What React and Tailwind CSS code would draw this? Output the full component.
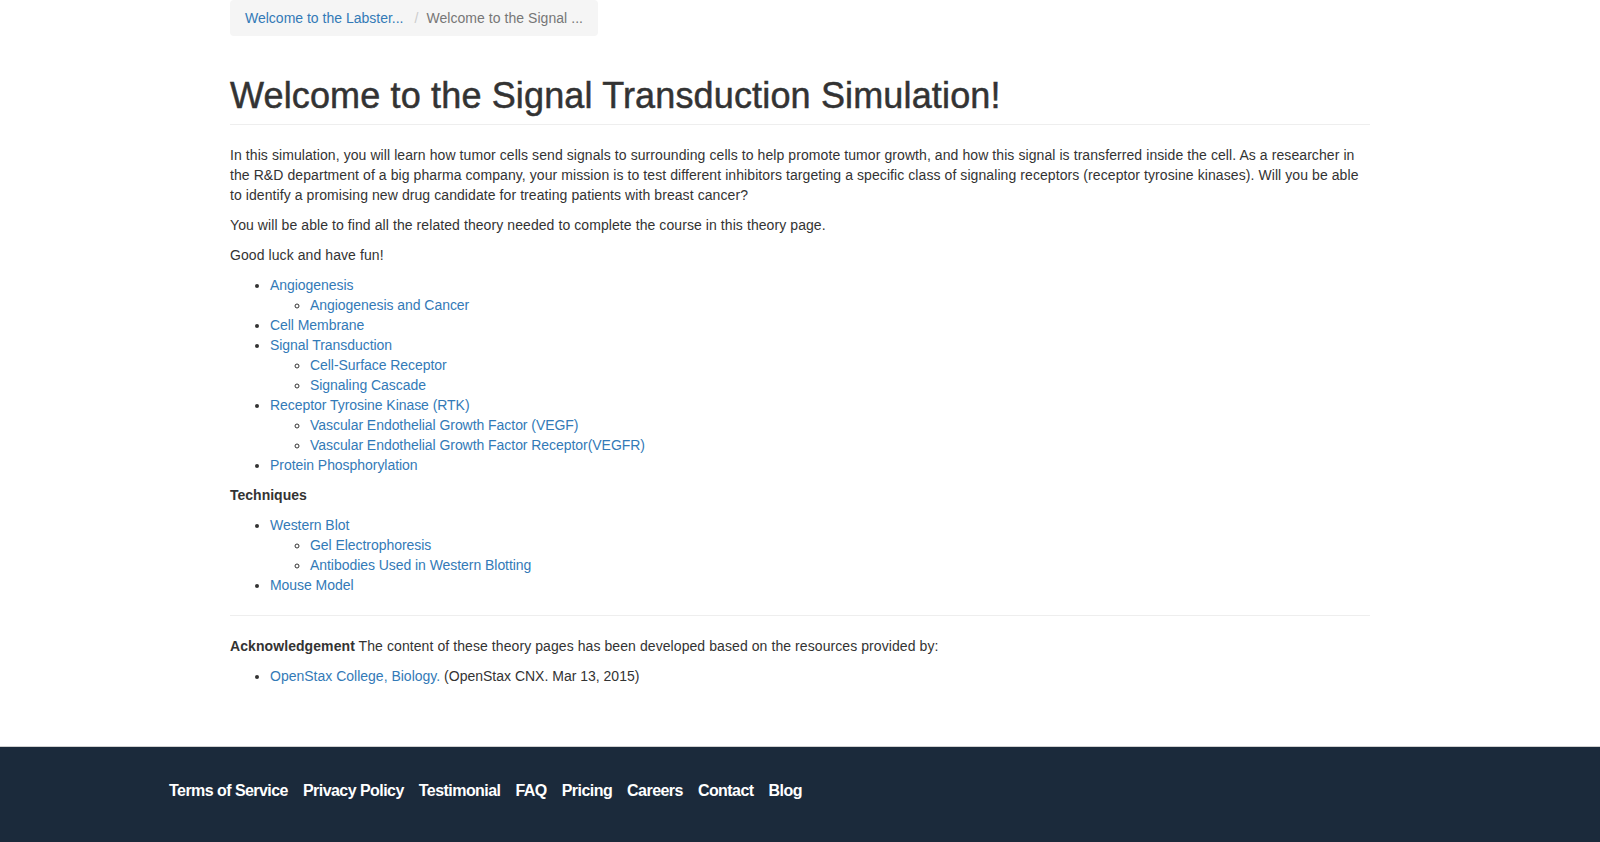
import React from "react";

const link = "text-[#337ab7] hover:underline";

const topics = [
    { title: "Angiogenesis", children: ["Angiogenesis and Cancer"] },
    { title: "Cell Membrane", children: [] },
    { title: "Signal Transduction", children: ["Cell-Surface Receptor", "Signaling Cascade"] },
    { title: "Receptor Tyrosine Kinase (RTK)", children: ["Vascular Endothelial Growth Factor (VEGF)", "Vascular Endothelial Growth Factor Receptor(VEGFR)"] },
    { title: "Protein Phosphorylation", children: [] },
];

const techniques = [
    { title: "Western Blot", children: ["Gel Electrophoresis", "Antibodies Used in Western Blotting"] },
    { title: "Mouse Model", children: [] },
];

const footerLinks = ["Terms of Service", "Privacy Policy", "Testimonial", "FAQ", "Pricing", "Careers", "Contact", "Blog"];

function TopicList({ items, className = "" }) {
    return (
        <ul className={`list-disc pl-[40px] tracking-[-0.05px] ${className}`}>
            {items.map(item => (
                <li key={item.title}>
                    <a href="#" className={link}>{item.title}</a>
                    {item.children.length > 0 && (
                        <ul className="list-[circle] pl-[40px]">
                            {item.children.map(child => (
                                <li key={child}><a href="#" className={link}>{child}</a></li>
                            ))}
                        </ul>
                    )}
                </li>
            ))}
        </ul>
    );
}

export default function App() {
    return (
        <div className="min-h-screen bg-white font-['Liberation_Sans',Arial,sans-serif] text-[14px] leading-[20px] text-[#333]">
            <div className="mx-auto w-[1170px] px-[15px] pb-[60px]">
                <ol className="inline-flex items-center rounded-[4px] bg-[#f5f5f5] px-[15px] py-[8px]">
                    <li><a href="#" className={link}>Welcome to the Labster...</a></li>
                    <li className="pl-[11px] pr-[5px] text-[#ccc]">/</li>
                    <li className="pl-[3px] tracking-[0.05px] text-[#777]">Welcome to the Signal ...</li>
                </ol>

                <div className="mt-[40px] border-b border-[#eee] pb-[8px]">
                    <h1 className="text-[36px] leading-[39.6px] font-normal tracking-[0.15px] text-[#333] [-webkit-text-stroke:0.5px_#333]">Welcome to the Signal Transduction Simulation!</h1>
                </div>

                <div className="mt-[20px]">
                    <div className="tracking-[0.08px]">
                        <p className="mb-[10px]">
                            In this simulation, you will learn how tumor cells send signals to surrounding cells to help promote tumor growth, and how this signal is transferred inside the cell. As a researcher in the R&amp;D department of a big pharma company, your mission is to test different inhibitors targeting a specific class of signaling receptors (receptor tyrosine kinases). Will you be able to identify a promising new drug candidate for treating patients with breast cancer?
                        </p>
                        <p className="mb-[10px]">You will be able to find all the related theory needed to complete the course in this theory page.</p>
                        <p className="mb-[10px]">Good luck and have fun!</p>
                    </div>

                    <TopicList items={topics} className="mb-[10px]" />

                    <p className="mb-[10px] font-bold">Techniques</p>

                    <TopicList items={techniques} />

                    <hr className="my-[20px] border-0 border-t border-[#eee]" />

                    <p className="mb-[10px] tracking-[0.08px]"><b>Acknowledgement</b> The content of these theory pages has been developed based on the resources provided by:</p>
                    <ul className="list-disc pl-[40px]">
                        <li><a href="#" className={link}>OpenStax College, Biology.</a> (OpenStax CNX. Mar 13, 2015)</li>
                    </ul>
                </div>
            </div>

            <footer className="border-t border-[#d0d0d0] bg-[#1b2a3b] pt-[33px] pb-[48px]">
                <div className="mx-auto flex w-[1292px] gap-[15px] px-[15px]">
                    {footerLinks.map(item => (
                        <a key={item} href="#" className="text-[16px] leading-[22px] font-bold tracking-[-0.55px] text-white">{item}</a>
                    ))}
                </div>
            </footer>
        </div>
    );
}
